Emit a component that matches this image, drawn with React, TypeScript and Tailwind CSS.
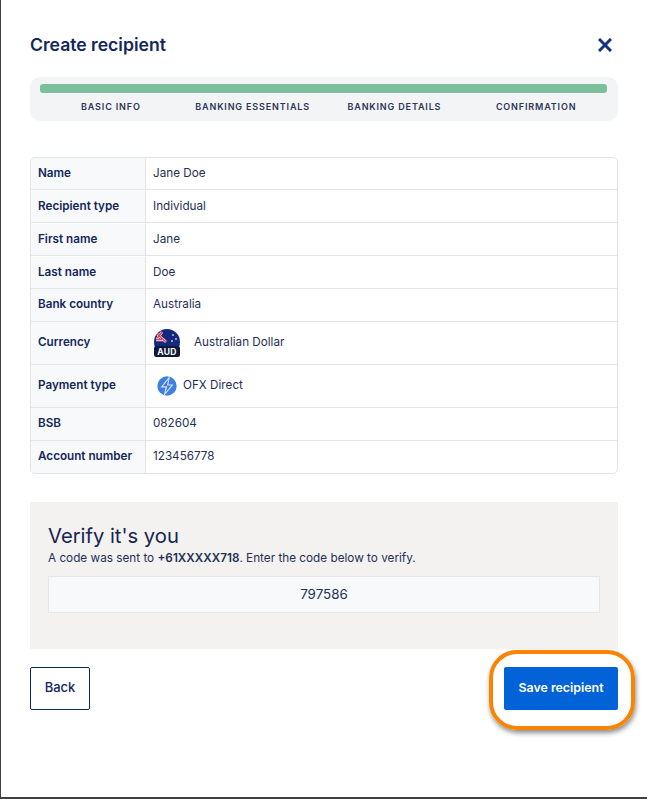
import React from "react";

const Flag = () => (
  <svg width="26" height="28" viewBox="0 0 26 28" className="block">
    <defs>
      <clipPath id="c"><circle cx="13" cy="13" r="13" /></clipPath>
    </defs>
    <g clipPath="url(#c)">
      <rect width="26" height="26" fill="#14297e" />
      <path d="M3 5 L12 13 M2 11 H11 M8 3 L3 10" stroke="#f2e4ea" strokeWidth="2.6" />
      <path d="M3 5 L12 13 M2 10.5 H8 M8 3 L3.5 9" stroke="#e5405c" strokeWidth="1.5" />
      <circle cx="19" cy="6" r="0.9" fill="#cfd6ee" />
      <circle cx="22" cy="10" r="0.9" fill="#cfd6ee" />
      <circle cx="18" cy="12" r="0.9" fill="#cfd6ee" />
    </g>
    <rect x="0" y="17" width="26" height="11" rx="2.5" fill="#0d1a3a" />
    <text x="13" y="25.6" textAnchor="middle" fontSize="8.5" fontWeight="700" fill="#fff" fontFamily="Inter, sans-serif" letterSpacing="0.4">AUD</text>
  </svg>
);

const Bolt = () => (
  <svg width="20" height="22" viewBox="0 0 20 22" className="block">
    <circle cx="10" cy="11" r="9.7" fill="#3f7fe2" />
    <path d="M13 0.5 L3.5 12.5 H8.5 L6.5 21.5 L16.5 9.5 H11.5 Z" fill="#cfe0f7" />
    <path d="M11.5 4.5 L6 11.3 H10.5 L8.5 17.5 L14 10.5 H9.7 Z" fill="#3a74d6" />
  </svg>
);

const rows: { k: string; v: React.ReactNode; h: string }[] = [
  { k: "Name", v: "Jane Doe", h: "h-[31px]" },
  { k: "Recipient type", v: "Individual", h: "h-[33px] pt-px" },
  { k: "First name", v: "Jane", h: "h-[33px] pt-px" },
  { k: "Last name", v: "Doe", h: "h-[33px] pt-px" },
  { k: "Bank country", v: "Australia", h: "h-[33px]" },
  {
    k: "Currency",
    v: (
      <div className="flex items-center gap-[14px] pl-px">
        <Flag />
        <span className="-mt-[1px]">Australian Dollar</span>
      </div>
    ),
    h: "h-[43px]",
  },
  {
    k: "Payment type",
    v: (
      <div className="flex items-center gap-[6px] pl-1">
        <Bolt />
        <span>OFX Direct</span>
      </div>
    ),
    h: "h-[43px]",
  },
  { k: "BSB", v: "082604", h: "h-[33px]" },
  { k: "Account number", v: "123456778", h: "h-[33px]" },
];

const steps = ["BASIC INFO", "BANKING ESSENTIALS", "BANKING DETAILS", "CONFIRMATION"];

export default function App() {
  return (
    <div className="relative h-[799px] w-[647px] overflow-hidden bg-white border-l border-b-2 border-[#404040] pl-[29px] pr-[29px] text-[#1a2a52] font-['Inter',sans-serif]">
      <div className="flex h-[77px] items-center justify-between pt-[13px]">
        <h1 className="text-[17.6px] font-semibold text-[#12275c]">Create recipient</h1>
        <svg width="14" height="14" viewBox="0 0 14 14" className="mr-[6px]">
          <path d="M1 1 L13 13 M13 1 L1 13" stroke="#12327f" strokeWidth="3" />
        </svg>
      </div>

      <div className="h-[44px] rounded-[10px] bg-[#f3f4f6] pl-[10px] pr-[11px] pt-[7px]">
        <div className="h-[9px] rounded-[3px] bg-[#7bbf9b]" />
        <div className="mt-[8px] grid grid-cols-4 text-center text-[9px] leading-[11px] font-semibold tracking-[0.85px] text-[#2a3558]">
          {steps.map((s) => (
            <span key={s}>{s}</span>
          ))}
        </div>
      </div>

      <div className="mt-[36px] overflow-hidden rounded-[5px] border border-[#e3e4e6] text-[11.7px]">
        {rows.map((r, i) => (
          <div key={r.k} className={`flex ${r.h} ${i > 0 ? "border-t border-[#e3e4e6]" : ""}`}>
            <div className="flex w-[115px] items-center bg-[#f8f9fb] pl-[7px] font-semibold text-[#12275c] border-r border-[#e3e4e6]">
              {r.k}
            </div>
            <div className="flex items-center pl-[7px] text-[#1f2f55]">{r.v}</div>
          </div>
        ))}
      </div>

      <div className="mt-[28px] h-[147px] bg-[#f3f2f1] px-[18px] pt-[20px]">
        <h2 className="text-[20.2px] leading-[28px] text-[#16254f]">Verify it's you</h2>
        <p className="mt-px text-[11.75px] leading-[15px] text-[#1f2f55]">
          A code was sent to <b className="font-semibold">+61XXXXX718</b>. Enter the code below to verify.
        </p>
        <div className="mt-[10px] flex h-[37px] items-center justify-center border border-[#e6e6e8] bg-[#f8f9fb] text-[13.4px] text-[#1f2f55]">
          797586
        </div>
      </div>

      <div className="mt-[18px] flex justify-between">
        <button className="h-[43px] w-[60px] rounded-[2px] border border-[#0b2a5c] bg-white pb-[2px] text-[13px] font-medium text-[#12275c]">
          Back
        </button>
        <button className="h-[43px] w-[114px] rounded-[2px] bg-[#0263d8] pb-px text-[12.4px] font-semibold text-white">
          Save recipient
        </button>
      </div>

      <div className="absolute left-[488px] top-[650px] h-[80px] w-[146px] rounded-[28px] border-[4px] border-[#f98404] shadow-[1px_3px_5px_rgba(0,0,0,0.45)]" />
    </div>
  );
}
